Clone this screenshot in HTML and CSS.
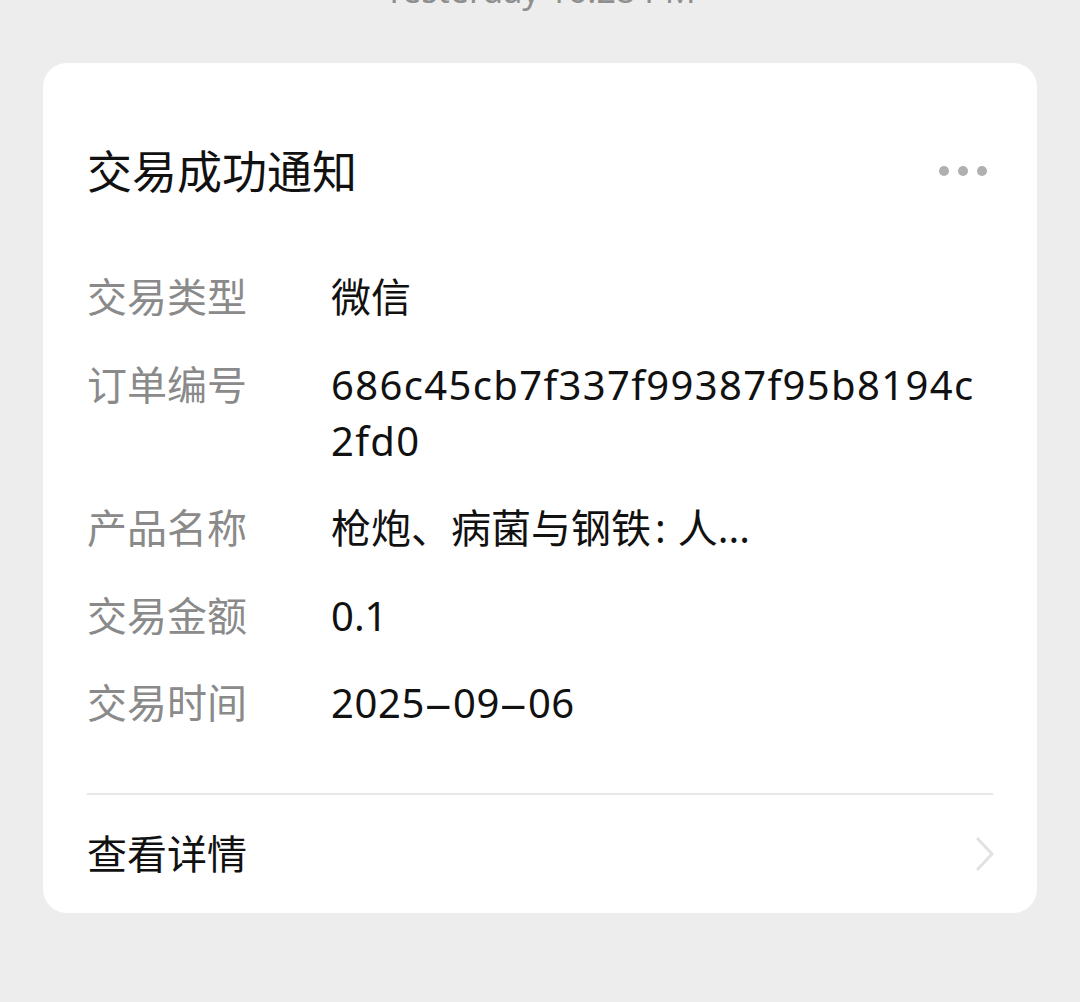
FILE: index.html
```html
<!DOCTYPE html>
<html lang="zh-CN">
<head>
<meta charset="utf-8">
<link rel="stylesheet" href="styles.css">
</head>
<body>
<div class="time">Yesterday 16:28 PM</div>
<div class="card">
  <div class="head">
    <div class="title">交易成功通知</div>
    <div class="more"><span></span><span></span><span></span></div>
  </div>
  <div class="rows">
    <div class="row"><div class="label">交易类型</div><div class="value">微信</div></div>
    <div class="row"><div class="label">订单编号</div><div class="value hex">686c45cb7f337f99387f95b8194c2fd0</div></div>
    <div class="row"><div class="label">产品名称</div><div class="value">枪炮、病菌与钢铁<span class="colon">:</span>人...</div></div>
    <div class="row"><div class="label">交易金额</div><div class="value">0.1</div></div>
    <div class="row"><div class="label">交易时间</div><div class="value num">2025<span class="dash">-</span>09<span class="dash">-</span>06</div></div>
  </div>
  <div class="foot">
    <div class="foot-text">查看详情</div>
    <svg class="chev" width="24" height="36" viewBox="0 0 24 36"><path d="M4 2 L19 18 L4 34" fill="none" stroke="#e2e2e2" stroke-width="3"/></svg>
  </div>
</div>
</body>
</html>
```
FILE: styles.css
```css
html, body {
  margin: 0;
  padding: 0;
  background: #ededed;
  font-family: "Noto Sans", "Noto Sans CJK SC", sans-serif;
}
.time {
  height: 63px;
  margin-top: -27px;
  box-sizing: border-box;
  text-align: center;
  font-size: 34px;
  line-height: 34px;
  color: #8f8f8f;
}
.card {
  margin: 27px 43px 0 43px;
  width: 994px;
  box-sizing: border-box;
  background: #fff;
  border-radius: 24px;
  padding: 78px 44px 0 44px;
  height: 850px;
}
.head {
  display: flex;
  align-items: center;
  justify-content: space-between;
  height: 62px;
}
.title {
  font-size: 45px;
  line-height: 62px;
  color: #111;
}
.more {
  display: flex;
  gap: 9px;
  margin-right: 6px;
  margin-top: -2px;
}
.more span {
  width: 10px;
  height: 10px;
  border-radius: 50%;
  background: #b0b0b0;
}
.rows {
  margin-top: 66px;
  display: flex;
  flex-direction: column;
  gap: 31.5px;
  padding-bottom: 62px;
  border-bottom: 2px solid #e8e8e8;
}
.row {
  display: flex;
  font-size: 40px;
  line-height: 56px;
}
.label {
  width: 244px;
  flex: none;
  color: #8a8a8a;
}
.value {
  flex: 1;
  color: #111;
  word-break: break-all;
}
.hex {
  letter-spacing: 1.35px;
}
.colon {
  margin: 0 12px 0 4px;
}
.num {
  letter-spacing: 0.6px;
}
.dash {
  display: inline-block;
  width: 28px;
  text-align: center;
  transform: scaleX(2.3);
}
.foot {
  height: 117px;
  display: flex;
  align-items: center;
  justify-content: space-between;
}
.foot-text {
  font-size: 40px;
  line-height: 56px;
  color: #111;
}
.chev {
  margin-right: -4px;
}
```
